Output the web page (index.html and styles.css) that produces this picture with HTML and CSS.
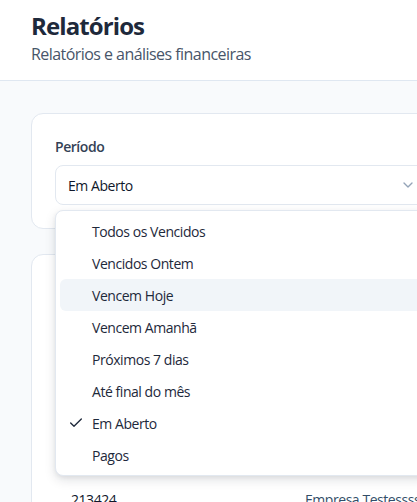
FILE: index.html
```html
<!DOCTYPE html>
<html lang="pt-BR">
<head>
<meta charset="utf-8">
<title>Relatórios</title>
<link rel="stylesheet" href="styles.css">
</head>
<body>
<div class="app">
  <header class="page-header">
    <h1 class="title">Relatórios</h1>
    <p class="subtitle">Relatórios e análises financeiras</p>
  </header>
  <main class="content">
    <section class="card filters">
      <label class="field-label">Período</label>
      <div class="select-wrap">
        <button class="select-trigger" type="button">
          <span>Em Aberto</span>
          <svg class="chevron" viewBox="0 0 24 24" width="16" height="16" fill="none" stroke="currentColor" stroke-width="2" stroke-linecap="round" stroke-linejoin="round"><path d="m6 9 6 6 6-6"/></svg>
        </button>
        <div class="select-menu" role="listbox">
          <div class="option">Todos os Vencidos</div>
          <div class="option">Vencidos Ontem</div>
          <div class="option is-hover">Vencem Hoje</div>
          <div class="option">Vencem Amanhã</div>
          <div class="option">Próximos 7 dias</div>
          <div class="option">Até final do mês</div>
          <div class="option is-selected">
            <svg class="check" viewBox="0 0 24 24" width="16" height="16" fill="none" stroke="currentColor" stroke-width="2" stroke-linecap="round" stroke-linejoin="round"><path d="M20 6 9 17l-5-5"/></svg>
            Em Aberto
          </div>
          <div class="option">Pagos</div>
        </div>
      </div>
    </section>
    <section class="card results">
      <div class="results-head"></div>
      <table class="table">
        <tbody>
          <tr><td class="doc">213424</td><td class="client">Empresa Testessss</td></tr>
        </tbody>
      </table>
    </section>
  </main>
</div>
</body>
</html>
```
FILE: styles.css
```css
* { box-sizing: border-box; }
html, body { margin: 0; padding: 0; }
body {
  font-family: "Open Sans", "Noto Sans", sans-serif;
  color: #0f172a;
  background: #f8fafc;
  overflow: hidden;
  width: 417px;
  height: 502px;
  letter-spacing: -0.45px;
}
.app { width: 480px; }
.page-header {
  background: #fff;
  border-bottom: 1px solid #dfe7f1;
  padding: 10px 31px 0;
  height: 81px;
}
.title {
  margin: 0;
  font-size: 24px;
  line-height: 32px;
  font-weight: 700;
  color: #1e293b;
  letter-spacing: -0.9px;
}
.subtitle {
  margin: 0;
  font-size: 16px;
  line-height: 24px;
  color: #475569;
  letter-spacing: -0.55px;
}
.content {
  padding: 32px 0 0 31px;
  display: flex;
  flex-direction: column;
  gap: 25px;
}
.card {
  background: #fff;
  border: 1px solid #e2e8f0;
  border-radius: 12px;
  width: 422px;
}
.filters { padding: 23px 23px 23px; }
.field-label {
  display: block;
  font-size: 14px;
  line-height: 20px;
  font-weight: 600;
  color: #334155;
  margin-bottom: 8px;
}
.select-wrap { position: relative; }
.select-trigger {
  width: 374px;
  height: 40px;
  display: flex;
  align-items: center;
  justify-content: space-between;
  padding: 0 12px;
  border: 1px solid #e2e8f0;
  border-radius: 8px;
  background: #fff;
  font: inherit;
  font-size: 14px;
  letter-spacing: -0.45px;
  color: #0f172a;
  text-align: left;
}
.chevron { color: #94a3b8; }
.select-menu {
  position: absolute;
  top: 45px;
  left: 0;
  width: 374px;
  padding: 4px;
  background: #fff;
  border: 1px solid #e2e8f0;
  border-radius: 8px;
  box-shadow: 0 4px 12px rgba(15, 23, 42, .12), 0 2px 4px rgba(15, 23, 42, .06);
  z-index: 10;
}
.option {
  position: relative;
  height: 32px;
  display: flex;
  align-items: center;
  padding: 0 8px 0 32px;
  font-size: 14px;
  color: #1e293b;
  border-radius: 6px;
}
.option.is-hover { background: #f1f5f9; }
.check {
  position: absolute;
  left: 8px;
  top: 8px;
  color: #1e293b;
}
.results { padding: 24px 23px 0; height: 300px; }
.results-head { height: 188px; }
.table { border-collapse: collapse; table-layout: fixed; width: 480px; font-size: 14px; }
.table td { padding: 23px 16px 14px; line-height: 20px; white-space: nowrap; }
.doc { color: #0f172a; width: 234px; }
.client { color: #334e68; }
```
